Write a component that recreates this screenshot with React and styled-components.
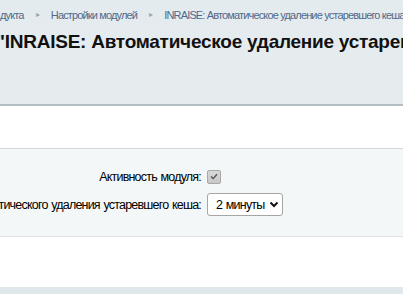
import React from "react";
import styled, { createGlobalStyle } from "styled-components";

const Global = createGlobalStyle`
  html, body {
    margin: 0;
    padding: 0;
    background: #e1e8eb;
    overflow: hidden;
  }
  body {
    font-family: "Liberation Sans", Arial, sans-serif;
  }
`;

function Chevron() {
  return (
    <svg width="10" height="7" viewBox="0 0 10 7">
      <path d="M1.5 1.5 L5 5 L8.5 1.5" fill="none" stroke="#111" strokeWidth="2" />
    </svg>
  );
}

function Check() {
  return (
    <svg width="8" height="7" viewBox="0 0 8 7">
      <path d="M1 3.5 L3.2 5.6 L7 1.2" fill="none" stroke="#555" strokeWidth="1.4" />
    </svg>
  );
}

function App() {
  return (
    <Page>
      <Global />
      <Header>
        <Crumbs>
          <Crumb>дукта</Crumb>
          <Arrow>▸</Arrow>
          <Crumb>Настройки модулей</Crumb>
          <Arrow>▸</Arrow>
          <Crumb>INRAISE: Автоматическое удаление устаревшего кеша</Crumb>
        </Crumbs>
        <Title>"INRAISE: Автоматическое удаление устаревшего кеша"</Title>
      </Header>
      <TopPanel />
      <FormPanel>
        <Row>
          <Label>Активность модуля:</Label>
          <Field>
            <CheckBox>
              <Check />
            </CheckBox>
          </Field>
        </Row>
        <Row>
          <Label>Период автоматического удаления устаревшего кеша:</Label>
          <Field>
            <Select>
              <span>2 минуты</span>
              <Chevron />
            </Select>
          </Field>
        </Row>
      </FormPanel>
      <BottomPanel />
    </Page>
  );
}

export default App;

const Page = styled.div`
  width: 403px;
  height: 294px;
  background: #e1e8eb;
`;

const Header = styled.div`
  height: 104px;
  background: linear-gradient(#e4ebee, #e6ecee);
  border-bottom: 2px solid #b3bec2;
`;

const Crumbs = styled.div`
  display: flex;
  align-items: center;
  white-space: nowrap;
  padding-top: 8px;
  height: 13px;
  font-size: 11px;
  letter-spacing: -0.85px;
  color: #50698a;
`;

const Crumb = styled.span``;

const Arrow = styled.span`
  color: #9aa7b2;
  font-size: 8px;
  margin: 0 12px 0 12px;
`;

const Title = styled.div`
  margin-top: 10px;
  margin-left: -4px;
  white-space: nowrap;
  font-size: 19px;
  letter-spacing: -0.25px;
  font-weight: bold;
  color: #111;
`;

const TopPanel = styled.div`
  height: 42px;
  background: #fff;
  border-bottom: 1px solid #cfd8db;
`;

const FormPanel = styled.div`
  height: 71px;
  background: #f4f7f8;
  border-bottom: 1px solid #dce3e6;
  padding-top: 16px;
  display: flex;
  flex-direction: column;
  gap: 5px;
`;

const Row = styled.div`
  display: flex;
  align-items: center;
  height: 23px;
`;

const Label = styled.div`
  width: 201px;
  display: flex;
  justify-content: flex-end;
  white-space: nowrap;
  font-size: 12.5px;
  letter-spacing: -0.8px;
  word-spacing: 1px;
  color: #000;
  padding-right: 6px;
  box-sizing: content-box;
`;

const Field = styled.div`
  display: flex;
  align-items: center;
`;

const CheckBox = styled.div`
  width: 12px;
  height: 12px;
  border: 1px solid #a8a8a8;
  border-radius: 2px;
  background: linear-gradient(#d8d8d8, #c8c8c8);
  display: flex;
  align-items: center;
  justify-content: center;
`;

const Select = styled.div`
  box-sizing: border-box;
  width: 76px;
  height: 23px;
  border: 1px solid #a6a6a6;
  border-radius: 3px;
  background: #fff;
  display: flex;
  align-items: center;
  justify-content: space-between;
  padding: 0 3px 0 8px;
  white-space: nowrap;
  font-size: 12.5px;
  letter-spacing: -0.8px;
  word-spacing: 1px;
  color: #000;
`;

const BottomPanel = styled.div`
  height: 50px;
  background: #fff;
`;
